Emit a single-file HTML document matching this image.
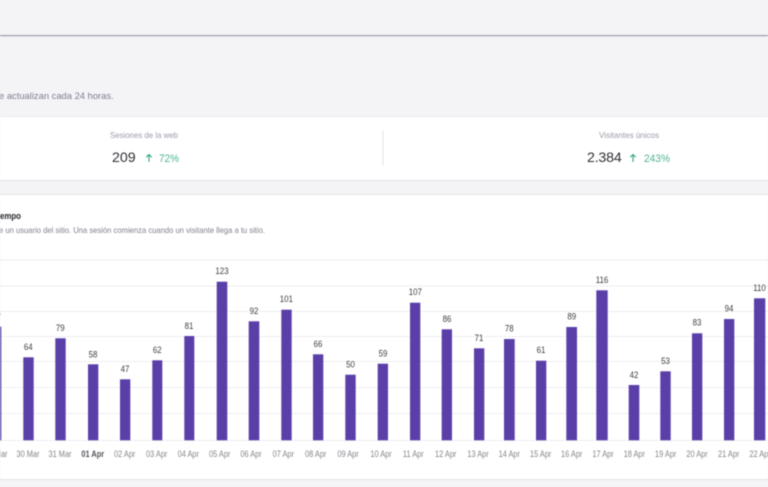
<!DOCTYPE html>
<html lang="es">
<head>
<meta charset="utf-8">
<title>Sesiones</title>
<style>
html,body{margin:0;padding:0;width:768px;height:487px;overflow:hidden;background:#f4f4f7}
svg{display:block;filter:blur(.45px)}
text{font-family:"Liberation Sans",sans-serif}
.v,.d{transform-box:fill-box;transform-origin:center}
.v{font-size:9.4px;fill:#3d3d42;text-anchor:middle;transform:scaleX(.84)}
.d{font-size:8.8px;fill:#85858c;text-anchor:middle;transform:scaleX(.84)}
.g{stroke:#eeeef1;stroke-width:1}
.b{fill:#5a3fa9}
</style>
</head>
<body>
<svg width="768" height="487" viewBox="0 0 768 487" xmlns="http://www.w3.org/2000/svg">
<rect width="768" height="487" fill="#f4f4f7"/>
<rect y="35" width="768" height="1" fill="#9a99ad"/>
<rect y="36" width="768" height="1" fill="#e4e4ea"/>

<text x="-1" y="99" font-size="9.4" fill="#7c7c8c">e actualizan cada 24 horas.</text>

<rect y="116" width="768" height="1" fill="#e9e9ed"/>
<rect y="117" width="768" height="63" fill="#ffffff"/>
<rect y="180" width="768" height="1" fill="#e0e0e5"/>
<rect x="382.5" y="131" width="1" height="34" fill="#e2e2e6"/>

<text x="110" y="138" font-size="8.4" textLength="68" lengthAdjust="spacingAndGlyphs" fill="#9a9aaa">Sesiones de la web</text>
<text x="112" y="162" font-size="14.2" fill="#2f2f35">209</text>
<path d="M149 162V154.500M146.300 157.200L149 154.500L151.700 157.200" fill="none" stroke="#2fa67f" stroke-width="1.100"/>
<text x="159" y="162" font-size="10.6" textLength="20" lengthAdjust="spacingAndGlyphs" fill="#4fb494">72%</text>

<text x="599" y="138" font-size="8.4" textLength="60" lengthAdjust="spacingAndGlyphs" fill="#9a9aaa">Visitantes únicos</text>
<text x="587" y="162" font-size="14.2" letter-spacing="-.2" fill="#2f2f35">2.384</text>
<path d="M633 162V154.500M630.300 157.200L633 154.500L635.700 157.200" fill="none" stroke="#2fa67f" stroke-width="1.100"/>
<text x="644" y="162" font-size="10.6" textLength="26" lengthAdjust="spacingAndGlyphs" fill="#4fb494">243%</text>

<rect y="194" width="768" height="1" fill="#e4e4e8"/>
<rect y="195" width="768" height="284" fill="#ffffff"/>
<rect y="479" width="768" height="1" fill="#e4e4e8"/>

<text x="0" y="219" font-size="9.5" font-weight="bold" textLength="21" lengthAdjust="spacingAndGlyphs" fill="#26262c">empo</text>
<text x="-1" y="233" font-size="8.2" textLength="266" lengthAdjust="spacingAndGlyphs" fill="#7f7f8d">e un usuario del sitio. Una sesión comienza cuando un visitante llega a tu sitio.</text>

<line class="g" x1="0" x2="768" y1="260" y2="260"/>
<line class="g" x1="0" x2="768" y1="286" y2="286"/>
<line class="g" x1="0" x2="768" y1="311.5" y2="311.5"/>
<line class="g" x1="0" x2="768" y1="336.5" y2="336.5"/>
<line class="g" x1="0" x2="768" y1="361.5" y2="361.5"/>
<line class="g" x1="0" x2="768" y1="387.5" y2="387.5"/>
<line class="g" x1="0" x2="768" y1="413.5" y2="413.5"/>
<line class="g" x1="0" x2="768" y1="440.5" y2="440.5"/>

<rect class="b" x="-8" y="326.7" width="9.3" height="113.6"/>
<rect class="b" x="23.3" y="357.3" width="10.4" height="83"/>
<rect class="b" x="55.3" y="338.3" width="10.4" height="102"/>
<rect class="b" x="88" y="364.3" width="10.3" height="76"/>
<rect class="b" x="120" y="379.3" width="10.3" height="61"/>
<rect class="b" x="152.3" y="360.3" width="10" height="80"/>
<rect class="b" x="184.3" y="336" width="10" height="104.3"/>
<rect class="b" x="216.7" y="281.7" width="10.6" height="158.6"/>
<rect class="b" x="248.7" y="321.3" width="10.6" height="119"/>
<rect class="b" x="281.3" y="309.7" width="10.4" height="130.6"/>
<rect class="b" x="313" y="354.3" width="10.3" height="86"/>
<rect class="b" x="345.3" y="374.7" width="10.4" height="65.6"/>
<rect class="b" x="377.7" y="363.7" width="10.3" height="76.6"/>
<rect class="b" x="410" y="302.7" width="10.3" height="137.6"/>
<rect class="b" x="441.7" y="329.3" width="10.3" height="111"/>
<rect class="b" x="474" y="348.3" width="10.3" height="92"/>
<rect class="b" x="504" y="339" width="10.7" height="101.3"/>
<rect class="b" x="536" y="360.7" width="10.3" height="79.6"/>
<rect class="b" x="566.3" y="327" width="10.7" height="113.3"/>
<rect class="b" x="596.3" y="290.3" width="11.4" height="150"/>
<rect class="b" x="628.7" y="385" width="10.6" height="55.3"/>
<rect class="b" x="660.3" y="371.3" width="10.4" height="69"/>
<rect class="b" x="692" y="333.3" width="10.3" height="107"/>
<rect class="b" x="724" y="319" width="10.3" height="121.3"/>
<rect class="b" x="754" y="298.3" width="11.3" height="142"/>

<text class="v" x="-3.5" y="320">87</text>
<text class="v" x="28.3" y="350">64</text>
<text class="v" x="60.3" y="331">79</text>
<text class="v" x="93" y="357.5">58</text>
<text class="v" x="125" y="372">47</text>
<text class="v" x="157.3" y="353">62</text>
<text class="v" x="189" y="329">81</text>
<text class="v" x="222" y="274">123</text>
<text class="v" x="254" y="314">92</text>
<text class="v" x="286.3" y="302">101</text>
<text class="v" x="318" y="347">66</text>
<text class="v" x="350.5" y="367.5">50</text>
<text class="v" x="383" y="356.5">59</text>
<text class="v" x="415.3" y="295">107</text>
<text class="v" x="447" y="322">86</text>
<text class="v" x="479" y="341">71</text>
<text class="v" x="509.3" y="331.5">78</text>
<text class="v" x="541" y="353">61</text>
<text class="v" x="571.7" y="319.5">89</text>
<text class="v" x="602" y="283">116</text>
<text class="v" x="634" y="378">42</text>
<text class="v" x="665.5" y="364">53</text>
<text class="v" x="697" y="325.5">83</text>
<text class="v" x="729" y="311.5">94</text>
<text class="v" x="759.5" y="291">110</text>

<text class="d" x="-4" y="457">29 Mar</text>
<text class="d" x="28" y="457">30 Mar</text>
<text class="d" x="60" y="457">31 Mar</text>
<text class="d" x="92.7" y="457" font-weight="bold" style="fill:#55555c">01 Apr</text>
<text class="d" x="124.7" y="457">02 Apr</text>
<text class="d" x="156.7" y="457">03 Apr</text>
<text class="d" x="188.3" y="457">04 Apr</text>
<text class="d" x="219.7" y="457">05 Apr</text>
<text class="d" x="251" y="457">06 Apr</text>
<text class="d" x="283.3" y="457">07 Apr</text>
<text class="d" x="315.7" y="457">08 Apr</text>
<text class="d" x="348" y="457">09 Apr</text>
<text class="d" x="381" y="457">10 Apr</text>
<text class="d" x="413.3" y="457">11 Apr</text>
<text class="d" x="445.7" y="457">12 Apr</text>
<text class="d" x="478" y="457">13 Apr</text>
<text class="d" x="509.3" y="457">14 Apr</text>
<text class="d" x="540.7" y="457">15 Apr</text>
<text class="d" x="571.7" y="457">16 Apr</text>
<text class="d" x="603" y="457">17 Apr</text>
<text class="d" x="634.3" y="457">18 Apr</text>
<text class="d" x="665.7" y="457">19 Apr</text>
<text class="d" x="697" y="457">20 Apr</text>
<text class="d" x="728.7" y="457">21 Apr</text>
<text class="d" x="760" y="457">22 Apr</text>
</svg>
</body>
</html>
